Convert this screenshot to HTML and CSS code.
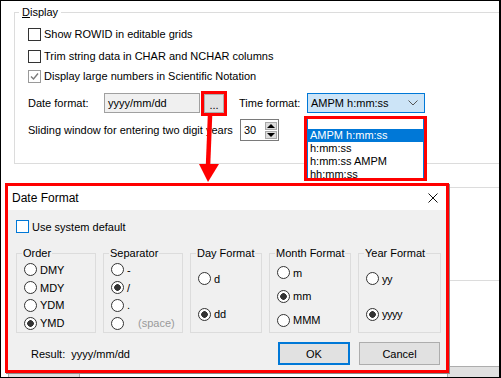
FILE: index.html
```html
<!DOCTYPE html>
<html lang="en">

<head>
    <meta charset="UTF-8" />
    <title>Options - Display</title>
    <link rel="stylesheet" href="styles.css">
</head>

<body>
    <div class="window">
        <fieldset class="group display">
            <legend><u>D</u>isplay</legend>
            <div class="check-row r1"><span class="cb"></span>Show ROWID in editable grids</div>
            <div class="check-row r2"><span class="cb"></span>Trim string data in CHAR and NCHAR columns</div>
            <div class="check-row r3">
                <span class="cb cb-dim">
                    <svg width="11" height="11" viewBox="0 0 11 11"><path d="M2 5.5 L4.5 8 L9 2.5" fill="none" stroke="#7a7a7a" stroke-width="1.4" /></svg>
                </span>Display large numbers in Scientific Notation
            </div>
            <div class="field-row date-row">
                <span class="date-label">Date format:</span>
                <span class="text-box">yyyy/mm/dd</span>
                <span class="btn dots">...</span>
                <span class="time-label">Time format:</span>
                <span class="combo">AMPM h:mm:ss
                    <svg width="10" height="6" viewBox="0 0 10 6"><path d="M0.5 0.5 L5 5 L9.5 0.5" fill="none" stroke="#555" stroke-width="1" /></svg>
                </span>
            </div>
            <div class="field-row slide-row">
                <span class="slide-label">Sliding window for entering two digit years</span>
                <span class="spin">
                    <span class="spin-val">30</span>
                    <span class="spin-btns">
                        <span class="spin-btn"><span class="tri-up"></span></span>
                        <span class="spin-btn"><span class="tri-down"></span></span>
                    </span>
                </span>
            </div>
        </fieldset>

        <div class="lower"></div>

        <div class="win-foot">
            <span class="btn foot-btn"></span>
            <span class="btn foot-btn"></span>
        </div>

        <!-- open drop-down of the time combo -->
        <div class="time-list">
            <div class="list-box">
                <div class="list-item sel">AMPM h:mm:ss</div>
                <div class="list-item">h:mm:ss</div>
                <div class="list-item">h:mm:ss AMPM</div>
                <div class="list-item">hh:mm:ss</div>
            </div>
        </div>

        <!-- Date Format dialog -->
        <div class="dialog">
            <div class="dlg-title">
                <span>Date Format</span>
                <svg width="10" height="10" viewBox="0 0 10 10"><path d="M0.5 0.5 L9.5 9.5 M9.5 0.5 L0.5 9.5" stroke="#111" stroke-width="1" /></svg>
            </div>
            <div class="dlg-body">
                <div class="check-row sys"><span class="cb cb-focus"></span>Use system default</div>

                <div class="dlg-groups">
                    <fieldset class="opt order">
                        <legend>Order</legend>
                        <div class="opts">
                            <div class="rd-row"><span class="rd"></span>DMY</div>
                            <div class="rd-row"><span class="rd"></span>MDY</div>
                            <div class="rd-row"><span class="rd"></span>YDM</div>
                            <div class="rd-row"><span class="rd on"></span>YMD</div>
                        </div>
                    </fieldset>
                    <fieldset class="opt sep">
                        <legend>Separator</legend>
                        <div class="opts">
                            <div class="rd-row"><span class="rd"></span>-</div>
                            <div class="rd-row"><span class="rd on"></span>/</div>
                            <div class="rd-row"><span class="rd"></span>.</div>
                            <div class="rd-row"><span class="rd"></span><span class="space-lbl">(space)</span></div>
                        </div>
                    </fieldset>
                    <fieldset class="opt day">
                        <legend>Day Format</legend>
                        <div class="opts">
                            <div class="rd-row"><span class="rd"></span>d</div>
                            <div class="rd-row"><span class="rd on"></span>dd</div>
                        </div>
                    </fieldset>
                    <fieldset class="opt month">
                        <legend>Month Format</legend>
                        <div class="opts">
                            <div class="rd-row"><span class="rd"></span>m</div>
                            <div class="rd-row"><span class="rd on"></span>mm</div>
                            <div class="rd-row"><span class="rd"></span>MMM</div>
                        </div>
                    </fieldset>
                    <fieldset class="opt year">
                        <legend>Year Format</legend>
                        <div class="opts">
                            <div class="rd-row"><span class="rd"></span>yy</div>
                            <div class="rd-row"><span class="rd on"></span>yyyy</div>
                        </div>
                    </fieldset>
                </div>

                <div class="dlg-foot">
                    <span class="result">Result:</span>
                    <span class="result-val">yyyy/mm/dd</span>
                    <span class="btn ok">OK</span>
                    <span class="btn cancel">Cancel</span>
                </div>
            </div>
        </div>

        <!-- red annotation arrow from the ... button to the dialog -->
        <svg class="arrow" width="501" height="378" viewBox="0 0 501 378">
            <path d="M210 116 L208 166" stroke="#f00" stroke-width="4.5" />
            <polygon points="199,164 219,164 208,182" fill="#f00" />
        </svg>
    </div>
</body>

</html>
```

FILE: styles.css
```css
* {
    margin: 0;
    padding: 0;
    box-sizing: border-box;
}

body {
    width: 501px;
    height: 378px;
    overflow: hidden;
    background: #fff;
    color: #000;
    font-family: "Liberation Sans", Arial, sans-serif;
    font-size: 11px;
}

.window {
    position: relative;
    width: 501px;
    height: 378px;
    border: 1px solid #000;
    border-right-width: 2px;
    background: #fff;
    overflow: hidden;
}

/* group boxes */
.group {
    border: 1px solid #dcdcdc;
    min-width: 0;
}

.group legend {
    padding: 0 3px;
    margin-left: -9px;
    line-height: 16px;
}

.display {
    margin: 3px -40px 0 13px;
    padding: 4px 13px 22px 13px;
}

.lower {
    margin: 23px -40px 0 13px;
    height: 94px;
    border: 1px solid #dcdcdc;
}

.win-foot {
    display: flex;
    justify-content: space-between;
    margin: 85px -20px 0 7px;
}

.foot-btn {
    width: 72px;
    height: 22px;
}

/* checkboxes */
.check-row {
    display: flex;
    align-items: center;
    height: 20px;
}

.r2 {
    margin-top: 2px;
}

.cb {
    width: 13px;
    height: 13px;
    margin-right: 3px;
    border: 1px solid #333;
    background: #fff;
    flex: none;
    display: flex;
    align-items: center;
    justify-content: center;
}

.cb-dim {
    border-color: #9a9a9a;
}

.cb-focus {
    border-color: #0078d7;
}

/* field rows */
.field-row {
    display: flex;
    align-items: center;
    height: 22px;
}

.date-row {
    margin-top: 6px;
}

.slide-row {
    margin-top: 5px;
}

.date-label {
    width: 76px;
}

.text-box {
    width: 96px;
    height: 20px;
    padding-left: 3px;
    line-height: 18px;
    border: 1px solid #a0a0a0;
    background: #f0f0f0;
}

.btn {
    display: flex;
    align-items: center;
    justify-content: center;
    background: #e1e1e1;
    border: 1px solid #adadad;
}

.dots {
    width: 20px;
    height: 19px;
    margin-left: 4px;
    padding-top: 3px;
    box-shadow: 0 0 0 3px #f00;
}

.time-label {
    width: 68px;
    margin-left: 15px;
}

.combo {
    width: 118px;
    height: 20px;
    padding: 0 6px 0 3px;
    display: flex;
    align-items: center;
    justify-content: space-between;
    border: 1px solid #0078d7;
    background: #cce4f7;
}

.slide-label {
    width: 212px;
}

.spin {
    width: 39px;
    height: 22px;
    display: flex;
    align-items: center;
    padding: 0 1px 0 3px;
    border: 1px solid #7a7a7a;
}

.spin-val {
    flex: 1;
}

.spin-btns {
    display: flex;
    flex-direction: column;
    gap: 1px;
}

.spin-btn {
    width: 12px;
    height: 8px;
    display: flex;
    align-items: center;
    justify-content: center;
    background: #dcdcdc;
    border: 1px solid #a8a8a8;
}

.tri-up {
    border-left: 4px solid transparent;
    border-right: 4px solid transparent;
    border-bottom: 4px solid #000;
}

.tri-down {
    border-left: 4px solid transparent;
    border-right: 4px solid transparent;
    border-top: 4px solid #000;
}

/* open combo list */
.time-list {
    position: absolute;
    left: 303px;
    top: 115px;
    width: 123px;
    height: 65px;
    border: 3px solid #f00;
    background: #fff;
    overflow: hidden;
}

.list-box {
    height: 100%;
    padding-top: 10px;
    border-left: 1px solid #0078d7;
    border-right: 1px solid #0078d7;
}

.list-item {
    height: 13px;
    line-height: 13px;
    padding-left: 2px;
}

.list-item.sel {
    background: #0078d7;
    color: #fff;
}

/* dialog */
.dialog {
    position: absolute;
    left: 4px;
    top: 182px;
    width: 444px;
    height: 190px;
    display: flex;
    flex-direction: column;
    border: 3px solid #f00;
    background: #f0f0f0;
    box-shadow: 1px 1px 0 #8a8a8a;
}

.dlg-title {
    height: 24px;
    display: flex;
    align-items: center;
    justify-content: space-between;
    padding: 0 8px 0 4px;
    background: #fff;
    font-size: 12px;
}

.dlg-body {
    flex: 1;
    padding: 10px 5px 0 8px;
}

.sys {
    height: 13px;
}

.dlg-groups {
    display: flex;
    gap: 7px;
    margin-top: 12px;
}

.opt {
    flex: none;
    border: 1px solid #dcdcdc;
    padding: 0 4px 0 7px;
    min-width: 0;
}

.opt legend {
    padding: 0 1px;
    margin-left: -2px;
    line-height: 16px;
}

.order,
.sep {
    width: 80px;
}

.day {
    width: 72px;
}

.month {
    width: 82px;
}

.year {
    width: 83px;
}

.opts {
    height: 71px;
    display: flex;
    flex-direction: column;
    justify-content: space-around;
}

.rd-row {
    display: flex;
    align-items: center;
    gap: 3px;
    height: 17px;
}

.rd {
    width: 13px;
    height: 13px;
    flex: none;
    border: 1px solid #333;
    border-radius: 50%;
    background: #fff;
}

.rd.on {
    background: radial-gradient(circle, #333 0 3px, #fff 3.6px);
}

.space-lbl {
    margin-left: 11px;
    color: #9a9a9a;
}

.year .rd-row {
    letter-spacing: -0.5px;
}

.dlg-foot {
    display: flex;
    align-items: center;
    height: 23px;
    margin-top: 9px;
}

.result {
    margin-left: 15px;
}

.result-val {
    margin-left: 6px;
}

.ok {
    width: 72px;
    height: 23px;
    margin-left: auto;
    border: 2px solid #0078d7;
}

.cancel {
    width: 81px;
    height: 23px;
    margin-left: 9px;
    margin-right: 1px;
}

.arrow {
    position: absolute;
    left: -1px;
    top: -1px;
}
```
